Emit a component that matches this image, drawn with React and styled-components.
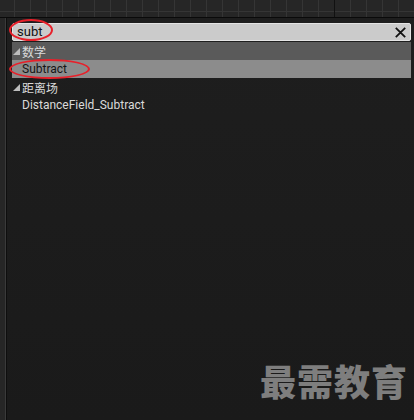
import React from "react";
import styled, { createGlobalStyle } from "styled-components";

const Global = createGlobalStyle`
  html, body { margin: 0; padding: 0; background: #1c1c1c; }
  body { font-family: Roboto, "Noto Sans CJK SC", sans-serif; }
`;

const Screen = styled.div`
  position: relative;
  width: 414px;
  height: 420px;
  display: flex;
  flex-direction: column;
  overflow: hidden;
  background: #1c1c1c;
`;

const GridStrip = styled.div`
  height: 17px;
  flex: none;
  border-bottom: 1px solid #0a0a0a;
  background-color: #262626;
  background-image:
    linear-gradient(to right, transparent 334px, #111 334px, #111 335px, transparent 335px),
    repeating-linear-gradient(to right, transparent 0, transparent 14px, #353535 14px, #353535 15px, transparent 15px, transparent 16px),
    linear-gradient(to bottom, transparent 11px, #353535 11px, #353535 12px, transparent 12px);
`;

const Body = styled.div`
  flex: 1;
  display: flex;
  min-height: 0;
`;

const SideStrip = styled.div`
  width: 7px;
  flex: none;
  background: linear-gradient(to right, #262626 0, #262626 5px, #3a3a3a 5px, #3a3a3a 6px, #0e0e0e 6px);
`;

const Panel = styled.div`
  flex: 1;
  display: flex;
  flex-direction: column;
  padding: 5px 3px 0 5px;
  background: linear-gradient(to bottom, #1e1e1e, #1a1a1a);
`;

const SearchBox = styled.div`
  height: 18px;
  box-sizing: border-box;
  display: flex;
  align-items: center;
  justify-content: space-between;
  background: #cbcbcb;
  border: 1px solid #e4e4e4;
  border-radius: 2px;
  padding: 0 3px 0 4px;
`;

const SearchText = styled.span`
  font-family: Roboto, sans-serif;
  font-size: 13px;
  color: #111;
  line-height: 16px;
`;

const ClearIcon = styled.svg`
  width: 11px;
  height: 11px;
  margin-right: 1px;
`;

const List = styled.div`
  display: flex;
  flex-direction: column;
  margin-top: 1px;
`;

const Row = styled.div`
  height: 18px;
  display: flex;
  align-items: center;
  padding-left: ${(p) => (p.$category ? "1px" : "10px")};
  background: ${(p) => p.$bg || "transparent"};
  color: ${(p) => p.$color || "#dadada"};
  font-size: 12px;
  font-family: Roboto, "Noto Sans CJK SC", sans-serif;
  white-space: nowrap;
`;

const Arrow = styled.svg`
  width: 7px;
  height: 7px;
  margin-right: 2px;
  margin-top: 1px;
`;

const Ring = styled.div`
  position: absolute;
  border: 2.5px solid #e8202a;
  border-radius: 50%;
  box-sizing: border-box;
`;

const Watermark = styled.div`
  position: absolute;
  right: 6px;
  top: 354px;
  font-family: "Noto Sans CJK SC", sans-serif;
  font-weight: 900;
  font-size: 36px;
  letter-spacing: 1px;
  color: #7e7e7e;
`;

const Triangle = () => (
  <Arrow viewBox="0 0 7 7">
    <polygon points="7,0 7,7 0,7" fill="#bdbdbd" />
  </Arrow>
);

export default function App() {
  return (
    <Screen>
      <Global />
      <GridStrip />
      <Body>
        <SideStrip />
        <Panel>
          <SearchBox>
            <SearchText>subt</SearchText>
            <ClearIcon viewBox="0 0 11 11">
              <path d="M0.8 0.8 L10.2 10.2 M10.2 0.8 L0.8 10.2" stroke="#111" strokeWidth="1.8" />
            </ClearIcon>
          </SearchBox>
          <List>
            <Row $category $bg="#5a5a5a">
              <Triangle />
              数学
            </Row>
            <Row $bg="#8c8c8c" $color="#151515">Subtract</Row>
            <Row $category>
              <Triangle />
              距离场
            </Row>
            <Row>DistanceField_Subtract</Row>
          </List>
        </Panel>
      </Body>
      <Ring style={{ left: 9, top: 19, width: 44, height: 22 }} />
      <Ring style={{ left: 9, top: 59, width: 81, height: 20 }} />
      <Watermark>最需教育</Watermark>
    </Screen>
  );
}
